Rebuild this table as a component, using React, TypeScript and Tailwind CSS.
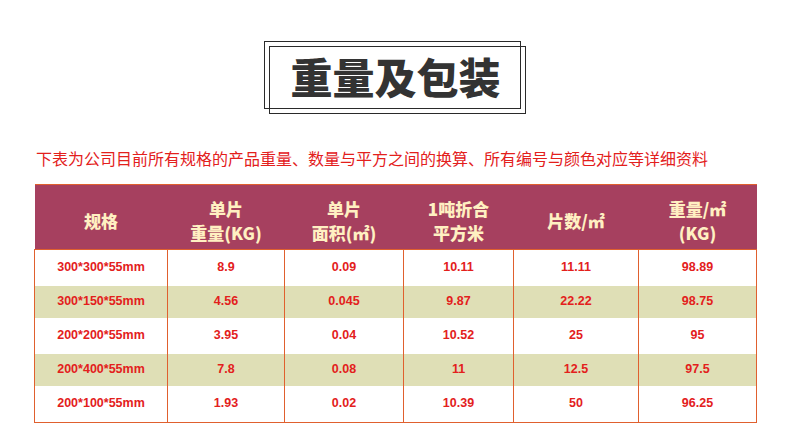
import React from 'react';

const cjk = "font-['Noto_Sans_CJK_SC','Noto_Sans',sans-serif]";

const headers: string[][] = [
  ['规格'],
  ['单片', '重量(KG)'],
  ['单片', '面积(㎡)'],
  ['1吨折合', '平方米'],
  ['片数/㎡'],
  ['重量/㎡', '(KG)'],
];

const colWidths = ['w-[133px]', 'w-[117px]', 'w-[119px]', 'w-[110px]', 'w-[125px]', 'w-[118px]'];

// each row: values + height + stripe
const rows = [
  { cells: ['300*300*55mm', '8.9', '0.09', '10.11', '11.11', '98.89'], h: 'h-[36px]', alt: false },
  { cells: ['300*150*55mm', '4.56', '0.045', '9.87', '22.22', '98.75'], h: 'h-[32px]', alt: true },
  { cells: ['200*200*55mm', '3.95', '0.04', '10.52', '25', '95'], h: 'h-[36px]', alt: false },
  { cells: ['200*400*55mm', '7.8', '0.08', '11', '12.5', '97.5'], h: 'h-[32px]', alt: true },
  { cells: ['200*100*55mm', '1.93', '0.02', '10.39', '50', '96.25'], h: 'h-[37px]', alt: false },
];

export default function App() {
  return (
    <div className={`w-[790px] h-[447px] bg-white overflow-hidden ${cjk}`}>
      {/* Title with double frame */}
      <div className="relative mx-auto mt-[41px] w-[262px] h-[73px]">
        <div className="absolute left-[5px] top-[5px] w-[257px] h-[68px] border border-[#2a2a2a]" />
        <div className="relative w-[257px] h-[68px] border border-[#2a2a2a] flex items-center justify-center">
          <span className="text-[42px] font-black text-[#333] leading-none pt-[2px] pl-[6px]">重量及包装</span>
        </div>
      </div>

      {/* Subtitle */}
      <p className="ml-[36px] mt-[33px] text-[16px] leading-[22px] text-[#e3201c] whitespace-nowrap">
        下表为公司目前所有规格的产品重量、数量与平方之间的换算、所有编号与颜色对应等详细资料
      </p>

      {/* Table */}
      <table className="ml-[34px] mt-[15px] w-[722px] table-fixed border-collapse border-b border-[#e0602e]">
        <colgroup>
          {colWidths.map((w, i) => (
            <col key={i} className={w} />
          ))}
        </colgroup>
        <thead>
          <tr className="h-[65px] bg-[#a6405f] border-y border-[#e0602e]">
            {headers.map((lines, i) => (
              <th
                key={i}
                className="p-0 pt-[8px] text-center align-middle text-[17px] font-black leading-[24px] text-[#fff0c2]"
              >
                {lines.map((l, j) => (
                  <div key={j}>{l}</div>
                ))}
              </th>
            ))}
          </tr>
        </thead>
        <tbody>
          {rows.map((r, i) => (
            <tr key={i} className={`${r.h} ${r.alt ? 'bg-[#dfdfb6]' : 'bg-white'}`}>
              {r.cells.map((c, j) => (
                <td
                  key={j}
                  className="p-0 text-center align-middle border-x border-[#e0602e] font-['Liberation_Sans',Arial,sans-serif] text-[12.5px] font-bold text-[#e3201c]"
                >
                  {c}
                </td>
              ))}
            </tr>
          ))}
        </tbody>
      </table>
    </div>
  );
}
